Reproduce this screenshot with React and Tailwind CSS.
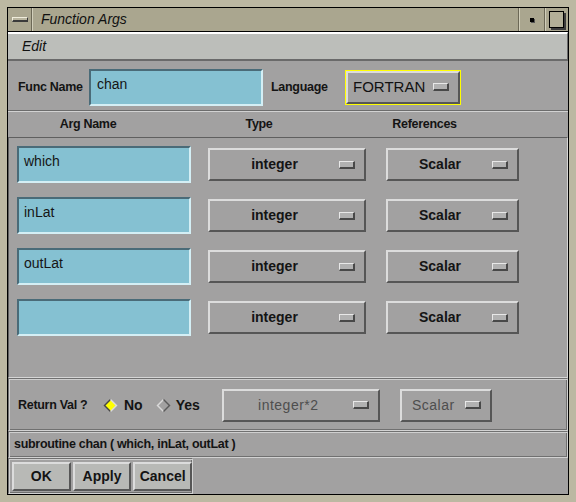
import React from "react";

const bevelOut = "border-2 border-t-[#dcdcdc] border-l-[#dcdcdc] border-b-[#565656] border-r-[#565656]";
const fieldIn = "border-2 border-t-[#4a6b78] border-l-[#4a6b78] border-b-[#d4eff5] border-r-[#d4eff5]";
const etched = "border border-t-[#707070] border-l-[#707070] border-b-[#d2d2d2] border-r-[#d2d2d2] shadow-[inset_1px_1px_0_#cfcfcf,inset_-1px_-1px_0_#707070]";
const label = "text-[12.5px] font-bold tracking-[-0.3px]";

function Indicator() {
    return (
        <span className="block w-[16px] h-[8px] bg-[#b1b1b1] border-t border-l border-t-[#e8e8e8] border-l-[#e8e8e8] border-b-2 border-r-2 border-b-[#484848] border-r-[#484848]" />
    );
}

function OptionButton({ label, width, disabled }) {
    return (
        <div className={`${width} h-[33px] shrink-0 flex items-center bg-[#a2a1a1] ${bevelOut}`}>
            <span className={disabled ? "flex-1 text-center text-[14px] text-[#4e4e4e] tracking-[0.5px]" : "flex-1 text-center text-[14px] font-bold text-[#141414]"}>
                {label}
            </span>
            <Indicator />
            <span className="w-[9px]" />
        </div>
    );
}

function Field({ value, width }) {
    return (
        <div className={`${width} h-[37px] shrink-0 bg-[#85c1d2] ${fieldIn} pl-[5px] pt-[5px] text-[14px] leading-[16px] text-[#151515]`}>
            {value}
        </div>
    );
}

function Diamond({ on }) {
    return (
        <svg width="15" height="15" viewBox="0 0 15 15" className="shrink-0">
            <polygon points="7.5,0.5 0.5,7.5 7.5,14.5" fill={on ? "#474747" : "#dadada"} />
            <polygon points="7.5,0.5 14.5,7.5 7.5,14.5" fill={on ? "#dcdcdc" : "#5a5a5a"} />
            <polygon points="7.5,2.5 12.5,7.5 7.5,12.5 2.5,7.5" fill={on ? "#ffff00" : "#a2a1a1"} />
        </svg>
    );
}

const rows = ["which", "inLat", "outLat", ""];

export default function App() {
    return (
        <div className="w-[576px] h-[502px] p-[7px] bg-[#bcb8a2] font-['Liberation_Sans',Arial,sans-serif]">
            <div className="w-[562px] h-[488px] border border-black flex flex-col">
                {/* title bar */}
                <div className="h-[24px] flex bg-[#aaa68f] border-b border-black">
                    <div className="w-[24px] flex items-center justify-center border-r border-r-[#6c6856]">
                        <span className="block w-[16px] h-[5px] bg-[#b9b59f] border-t border-l border-[#f0eddc] border-b-2 border-r border-b-[#3a3a3a] border-r-[#3a3a3a]" />
                    </div>
                    <div className="flex-1 flex items-center pl-[8px] border-l border-l-[#d2cfbb] italic text-[14px] text-[#111]">
                        Function Args
                    </div>
                    <div className="w-[26px] flex items-center justify-center border-l border-l-[#6c6856] shadow-[inset_1px_0_0_#d2cfbb]">
                        <span className="block w-[4px] h-[4px] bg-black shadow-[1px_1px_0_#555]" />
                    </div>
                    <div className="w-[24px] flex items-center justify-center border-l border-l-[#6c6856] shadow-[inset_1px_0_0_#d2cfbb]">
                        <span className="block w-[15px] h-[17px] border border-black bg-[#b3af98] shadow-[2px_2px_0_#3c3c3c]" />
                    </div>
                </div>

                {/* menu bar */}
                <div className="h-[29px] flex items-center pl-[14px] bg-[#bcbeba] border-t-2 border-t-white border-b-2 border-b-[#6a6a6a] border-r border-r-[#6a6a6a]">
                    <span className="italic text-[14px] text-[#111]">Edit</span>
                </div>

                {/* content */}
                <div className="flex-1 flex flex-col bg-[#a2a1a1] text-[#141414]">
                    <div className="h-[50px] flex items-center pl-[10px] pt-[3px] border-b border-b-[#6c6c6c]">
                        <span className={`w-[71px] ${label}`}>Func Name</span>
                        <div className="w-[174px] h-[37px] bg-[#85c1d2] border-2 border-t-[#4a6b78] border-l-[#4a6b78] border-b-[#d4eff5] border-r-[#d4eff5] pl-[6px] pt-[5px] text-[14px] leading-[16px] text-[#151515]">
                            chan
                        </div>
                        <span className={`w-[74px] ml-[8px] ${label}`}>Language</span>
                        <div className="w-[116px] h-[35px] border border-[#ffff00]">
                            <div className={`h-full flex items-center bg-[#a2a1a1] ${bevelOut} pl-[5px] pr-[9px]`}>
                                <span className="flex-1 text-[15px] text-[#111]">FORTRAN</span>
                                <Indicator />
                            </div>
                        </div>
                    </div>

                    <div className={`h-[26px] flex items-center border-t border-t-[#d2d2d2] ${label}`}>
                        <span className="w-[160px] text-center">Arg Name</span>
                        <span className="w-[182px] text-center">Type</span>
                        <span className="w-[149px] text-center">References</span>
                    </div>

                    <div className="h-[241px] flex flex-col gap-[14px] pt-[8px] pl-[8px] border border-t-[#5f5f5f] border-l-[#5f5f5f] border-b-[#d6d6d6] border-r-[#d6d6d6]">
                        {rows.map((r, idx) => (
                            <div key={idx} className="flex items-center">
                                <Field value={r} width="w-[174px]" />
                                <div className="ml-[17px]">
                                    <OptionButton label="integer" width="w-[158px]" />
                                </div>
                                <div className="ml-[20px]">
                                    <OptionButton label="Scalar" width="w-[133px]" />
                                </div>
                            </div>
                        ))}
                    </div>

                    <div className={`h-[53px] flex items-center pl-[9px] pt-[1px] ${etched}`}>
                        <span className={`w-[85px] ${label}`}>Return Val ?</span>
                        <Diamond on />
                        <span className="ml-[6px] text-[14px] font-bold">No</span>
                        <span className="ml-[13px]">
                            <Diamond />
                        </span>
                        <span className="ml-[5px] text-[14px] font-bold">Yes</span>
                        <div className="ml-[22px]">
                            <OptionButton label="integer*2" width="w-[158px]" disabled />
                        </div>
                        <div className="ml-[20px]">
                            <OptionButton label="Scalar" width="w-[92px]" disabled />
                        </div>
                    </div>

                    <div className={`h-[27px] flex items-center pl-[5px] ${etched}`}>
                        <span className={label}>subroutine chan ( which, inLat, outLat )</span>
                    </div>

                    <div className={`w-[185px] h-[36px] flex gap-[2px] pl-[3px] pt-[3px] ${etched}`}>
                        {["OK", "Apply", "Cancel"].map((b) => (
                            <div key={b} className={`w-[59px] h-[29px] flex items-center justify-center bg-[#b8b9b6] ${bevelOut} text-[14px] font-bold`}>
                                {b}
                            </div>
                        ))}
                    </div>
                </div>
            </div>
        </div>
    );
}
